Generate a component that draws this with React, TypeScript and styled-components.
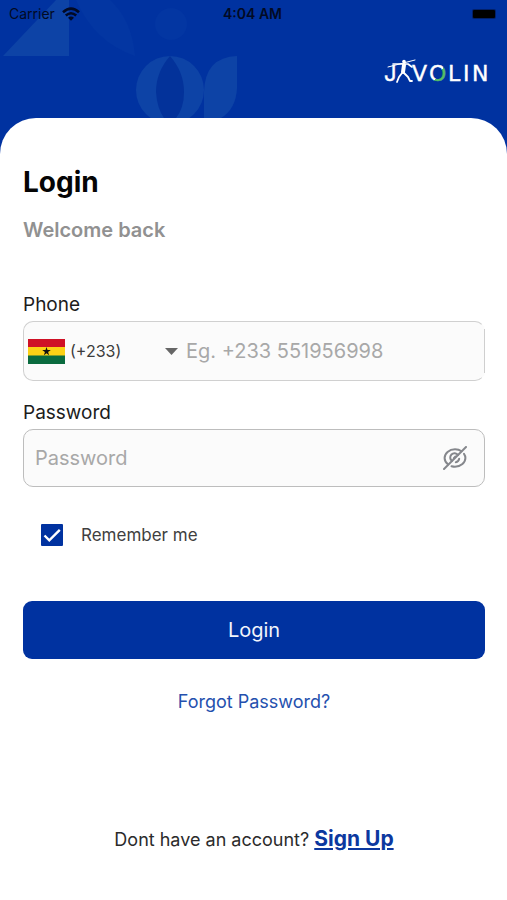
import React, { useState } from "react";
import styled, { createGlobalStyle } from "styled-components";

const blue = "#0032a0";

const GlobalStyle = createGlobalStyle`
  *, *::before, *::after { box-sizing: border-box; }
  body { margin: 0; background: #fff; }
  body, input, select, button { font-family: Inter, "Liberation Sans", sans-serif; }
`;

const Screen = styled.div`
  display: flex;
  flex-direction: column;
  min-height: 100vh;
  background: #fff;
`;

const Header = styled.header`
  position: relative;
  background: ${blue};
  padding-bottom: 68px;
  overflow: hidden;
`;

const Pattern = styled.svg`
  position: absolute;
  left: 0;
  top: 0;
`;

const StatusBar = styled.div`
  position: relative;
  display: grid;
  grid-template-columns: 1fr auto 1fr;
  align-items: center;
  height: 28px;
  padding: 0 11px 0 9px;
  color: #020a24;
  font-size: 14px;
  line-height: 20px;
`;

const Carrier = styled.span`
  display: flex;
  align-items: center;
  gap: 7px;
`;

const Clock = styled.time`
  font-weight: 600;
`;

const Battery = styled.svg`
  justify-self: end;
`;

const Brand = styled.div`
  position: relative;
  display: flex;
  justify-content: flex-end;
  padding: 30px 16px 0 0;
`;

const Sheet = styled.main`
  position: relative;
  flex: 1;
  display: flex;
  flex-direction: column;
  margin-top: -36px;
  padding: 46px 22px 48px 23px;
  background: #fff;
  border-radius: 36px 36px 0 0;
`;

const Title = styled.h1`
  margin: 0;
  font-size: 28px;
  line-height: 36px;
  font-weight: 700;
  color: #050505;
`;

const Subtitle = styled.p`
  margin: 18px 0 0;
  font-size: 20px;
  line-height: 24px;
  font-weight: 600;
  color: #919191;
`;

const Form = styled.form`
  display: flex;
  flex-direction: column;
  margin-top: 51px;
`;

const Field = styled.div`
  display: flex;
  flex-direction: column;
  gap: 4px;
  & + & { margin-top: 20px; }
`;

const Label = styled.label`
  font-size: 19px;
  line-height: 24px;
  color: #1c1c1c;
`;

const Control = styled.div<{ $split?: boolean }>`
  position: relative;
  display: flex;
  align-items: center;
  height: ${(p) => (p.$split ? 60 : 58)}px;
  border: 1px solid ${(p) => (p.$split ? "#d0d0d0" : "#bdbdbd")};
  border-right-color: ${(p) => (p.$split ? "transparent" : "#bdbdbd")};
  border-radius: 10px;
  background: #fbfbfb;
  padding: ${(p) => (p.$split ? "0 12px 0 4px" : "0 17px 0 11px")};
  ${(p) =>
    p.$split &&
    `&::after {
      content: "";
      position: absolute;
      right: -1px;
      top: 7px;
      bottom: 7px;
      width: 1px;
      background: #cfcfcf;
    }`}
`;

const TextInput = styled.input`
  flex: 1;
  min-width: 0;
  height: 48px;
  padding: 0;
  border: 0;
  outline: 0;
  background: transparent;
  font-size: 20px;
  color: #1c1c1c;
  &::placeholder { color: #a8a8a8; opacity: 1; }
`;

const Country = styled.div`
  position: relative;
  display: flex;
  align-items: center;
  width: 158px;
  flex: none;
`;

const CodeSelect = styled.select`
  appearance: none;
  flex: 1;
  height: 48px;
  padding: 0 0 0 5px;
  border: 0;
  outline: 0;
  background: transparent;
  font-size: 16px;
  color: #3c3c3c;
`;

const Caret = styled.svg`
  position: absolute;
  right: 8px;
  pointer-events: none;
`;

const IconButton = styled.button`
  display: flex;
  padding: 0;
  border: 0;
  background: none;
  cursor: pointer;
`;

const Remember = styled.label`
  display: flex;
  align-items: center;
  gap: 18px;
  margin: 36px 0 0 18px;
  font-size: 17px;
  line-height: 24px;
  color: #3f3f3f;
`;

const CheckWrap = styled.span`
  position: relative;
  display: flex;
`;

const Checkbox = styled.input`
  appearance: none;
  width: 22px;
  height: 22px;
  margin: 0;
  border: 2px solid ${blue};
  border-radius: 1px;
  &:checked { background: ${blue}; }
  &:not(:checked) + svg { display: none; }
`;

const Tick = styled.svg`
  position: absolute;
  inset: 0;
  pointer-events: none;
`;

const Submit = styled.button`
  height: 58px;
  margin-top: 54px;
  border: 0;
  border-radius: 9px;
  background: ${blue};
  color: #f2f5fb;
  font-size: 20px;
  cursor: pointer;
`;

const Forgot = styled.a`
  align-self: center;
  margin-top: 31px;
  font-size: 18px;
  line-height: 24px;
  color: #2450ae;
  text-decoration: none;
`;

const Footer = styled.p`
  margin: auto 0 0;
  text-align: center;
  font-size: 18px;
  line-height: 24px;
  color: #2b2b2b;
`;

const SignUp = styled.a`
  font-size: 21px;
  font-weight: 700;
  color: #0c389f;
  text-decoration: underline;
`;

function HeaderPattern() {
  return (
    <Pattern width="240" height="118" viewBox="0 0 240 118" aria-hidden="true">
      <path d="M3 56L56 0H69V56Z" fill="#0d43a6" />
      <path d="M76 0H110Q132 20 135 56Q94 42 76 0Z" fill="#0336a2" />
      <circle cx="171" cy="24" r="16" fill="#0336a2" />
      <circle cx="170" cy="90" r="34" fill="#0d43a6" />
      <path d="M170 56Q156 72 156 92Q157 108 164 118H176Q184 108 184 92Q184 72 170 56Z" fill="#03329a" />
      <path d="M204 118V92Q205 57 237 56V88Q236 109 221 118Z" fill="#0d43a6" />
    </Pattern>
  );
}

function Wifi() {
  return (
    <svg width="18" height="14" viewBox="0 0 18 14" fill="none" stroke="#020a24" strokeWidth="2.6" aria-hidden="true">
      <path d="M1 5.2Q9-2 17 5.2" />
      <path d="M3.8 8.5Q9 4 14.2 8.5" />
      <path d="M6 10.8Q9 8 12 10.8L9 13.8Z" fill="#020a24" stroke="none" />
    </svg>
  );
}

function Logo() {
  return (
    <svg width="107" height="28" viewBox="0 0 107 28" role="img" aria-label="Javolin">
      <defs>
        <linearGradient id="ring" x1="0" y1="0" x2="1" y2="1">
          <stop offset="54%" stopColor="#fff" />
          <stop offset="54%" stopColor="#55bd65" />
        </linearGradient>
      </defs>
      <g fill="#fff" fontFamily="'DejaVu Sans', sans-serif" fontSize="22" stroke="#fff" strokeWidth=".4">
        <text x="0" y="23" fontFamily="Inter, sans-serif">J</text>
        <text x="28" y="23">V</text>
        <text x="45" y="23" fill="url(#ring)" stroke="url(#ring)">O</text>
        <text x="64" y="23">L</text>
        <text x="79" y="23">I</text>
        <text x="88" y="23">N</text>
      </g>
      <g fill="none" stroke="#fff" strokeLinecap="round" strokeLinejoin="round">
        <path d="M4 9L31 2" strokeWidth="1" />
        <path d="M9 6L18 6L24 6L28 9" strokeWidth="1.6" />
        <path d="M20 7L19 14" strokeWidth="4" />
        <path d="M18 15L15 19L13 24M20 15L24 19L26 23L28 23" strokeWidth="1.8" />
      </g>
      <circle cx="20" cy="3.6" r="1.8" fill="#fff" />
    </svg>
  );
}

function GhanaFlag() {
  return (
    <svg width="37" height="25" viewBox="0 0 37 25" aria-hidden="true">
      <rect width="37" height="9" fill="#cf1126" />
      <rect y="8" width="37" height="9" fill="#fcd116" />
      <rect y="16.5" width="37" height="8.5" fill="#0a6b3f" />
      <path d="M18.5 8L19.5 11.1H22.8L20.1 13L21.1 16.2L18.5 14.3L15.9 16.2L16.9 13L14.2 11.1H17.5Z" fill="#111" />
    </svg>
  );
}

function EyeOff() {
  return (
    <svg width="24" height="24" viewBox="0 0 24 24" fill="none" stroke="#85878c" strokeWidth="2" strokeLinecap="round" aria-hidden="true">
      <path d="M18.5 5.3C16.8 4 14.6 3.3 12 3.3C6 3.3 1.6 7.6 1.6 12C1.6 14.6 3 16.9 5.2 18.5" />
      <path d="M8.5 20.2C9.6 20.5 10.8 20.7 12 20.7C18 20.7 22.4 16.4 22.4 12C22.4 10.5 21.9 9 21 7.8" />
      <path d="M15 9A4.3 4.3 0 1 0 9 15" />
      <path d="M16.2 12.8A4.3 4.3 0 0 1 12.8 16.2" />
      <path d="M10.8 12.2L12.5 10.6" />
      <path d="M1 23L23 1" />
    </svg>
  );
}

export default function App() {
  const [visible, setVisible] = useState(false);
  return (
    <Screen>
      <GlobalStyle />
      <Header>
        <HeaderPattern />
        <StatusBar>
          <Carrier>
            Carrier
            <Wifi />
          </Carrier>
          <Clock>4:04 AM</Clock>
          <Battery width="24" height="10" viewBox="0 0 24 10" aria-hidden="true">
            <rect width="24" height="10" rx="2" fill="#02206a" />
            <rect x="1" y="1" width="22" height="8" rx="1" fill="#000" />
          </Battery>
        </StatusBar>
        <Brand>
          <Logo />
        </Brand>
      </Header>
      <Sheet>
        <Title>Login</Title>
        <Subtitle>Welcome back</Subtitle>
        <Form onSubmit={(e) => e.preventDefault()}>
          <Field>
            <Label htmlFor="phone">Phone</Label>
            <Control $split>
              <Country>
                <GhanaFlag />
                <CodeSelect aria-label="Country code" defaultValue="233">
                  <option value="233">(+233)</option>
                </CodeSelect>
                <Caret width="13" height="7" viewBox="0 0 13 7" aria-hidden="true">
                  <path d="M0 0H13L6.5 7Z" fill="#666" />
                </Caret>
              </Country>
              <TextInput id="phone" type="tel" placeholder="Eg. +233 551956998" />
            </Control>
          </Field>
          <Field>
            <Label htmlFor="password">Password</Label>
            <Control>
              <TextInput id="password" type={visible ? "text" : "password"} placeholder="Password" />
              <IconButton type="button" aria-label="Toggle password visibility" onClick={() => setVisible(!visible)}>
                <EyeOff />
              </IconButton>
            </Control>
          </Field>
          <Remember>
            <CheckWrap>
              <Checkbox type="checkbox" defaultChecked />
              <Tick width="22" height="22" viewBox="0 0 22 22" fill="none" stroke="#fff" strokeWidth="2.4" aria-hidden="true">
                <path d="M3.5 11.5L8.3 16.3L18.8 5.8" />
              </Tick>
            </CheckWrap>
            Remember me
          </Remember>
          <Submit type="submit">Login</Submit>
          <Forgot href="#forgot">Forgot Password?</Forgot>
        </Form>
        <Footer>
          Dont have an account? <SignUp href="#signup">Sign Up</SignUp>
        </Footer>
      </Sheet>
    </Screen>
  );
}
